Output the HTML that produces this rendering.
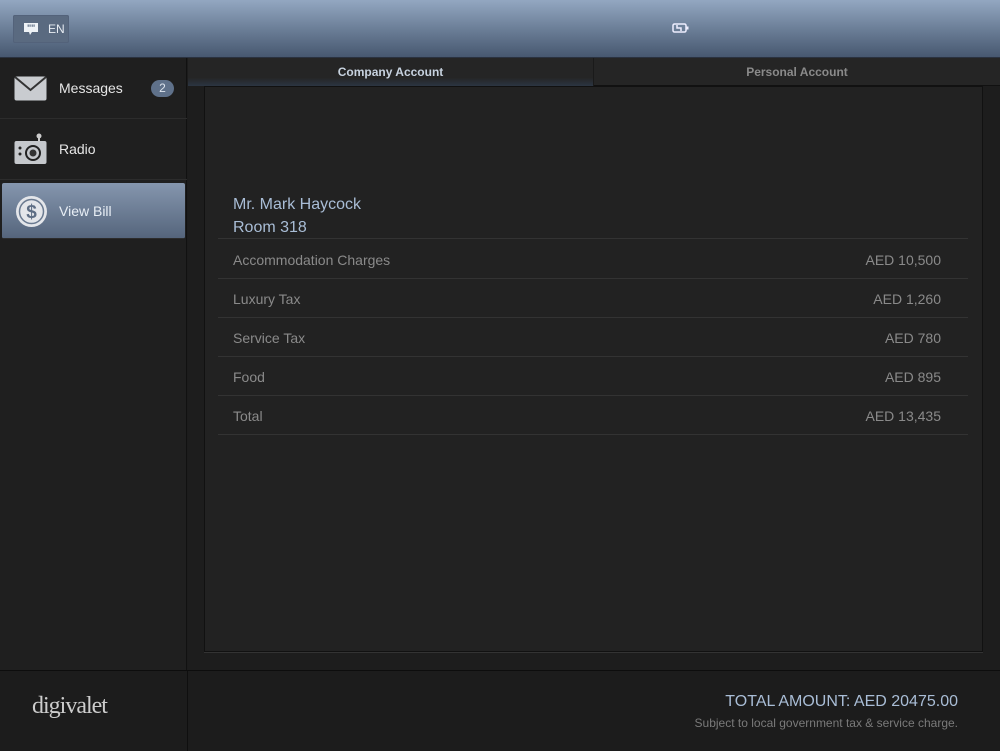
<!DOCTYPE html>
<html><head><style>
*{margin:0;padding:0;box-sizing:border-box}
body{width:1000px;height:750px;background:#1c1c1c;font-family:"Liberation Sans",sans-serif;position:relative;overflow:hidden}
.top{position:absolute;left:0;top:0;width:1000px;height:58px;background:linear-gradient(#93a7c1,#6c7f98 50%,#475870);border-bottom:1px solid #2a3240}
.en{position:absolute;left:13px;top:15px;width:56px;height:28px;background:#5a6a80;border-radius:2px;color:#e8edf3;font-size:12px;line-height:28px;padding-left:35px;box-shadow:inset 0 0 0 1px #53627a}
.side{position:absolute;left:0;top:58px;width:187px;height:612px;background:#1f1f1f;border-right:1px solid #111}
.item{position:absolute;left:0;width:187px;height:61px;border-bottom:1px solid #2c2c2c;color:#e6e6e6;font-size:14px;line-height:61px;padding-left:59px}
.sel{left:2px;width:183px;background:linear-gradient(#8596ae,#55657c);border-radius:2px;top:183px;height:56px;line-height:56px;padding-left:57px;color:#e8eef5}
.badge{position:absolute;right:13px;top:22px;width:23px;height:17px;border-radius:9px;background:#5f718a;color:#dde4ee;font-size:12px;line-height:17px;text-align:center;padding:0}
.tabs{position:absolute;left:188px;top:58px;width:812px;height:28px;background:#252525;border-bottom:1px solid #111}
.tab{position:absolute;top:0;height:28px;line-height:28px;text-align:center;font-size:12px;font-weight:bold}
.main{position:absolute;left:188px;top:86px;width:812px;height:584px;background:#1d1d1d}
.panel{position:absolute;left:204px;top:86px;width:779px;height:566px;background:#222;border:1px solid #111;box-shadow:0 1px 0 #333}
.row{position:absolute;left:218px;width:750px;height:39px;border-bottom:1px solid #333;color:#8a8a8a;font-size:14px;line-height:40px;padding-left:15px}
.row span{position:absolute;right:27px}
.foot{position:absolute;left:0;top:670px;width:1000px;height:80px;background:#1c1c1c;border-top:1px solid #0d0d0d}
</style></head><body>
<div class="top">
<div class="en"><svg style="position:absolute;left:10px;top:7px" width="16" height="15" viewBox="0 0 16 15"><path d="M1 1h14v9H9l-2 3-1-3H1z" fill="#eef2f6"/><text x="4" y="9" font-size="9" fill="#5a6a80" font-weight="bold">"</text><text x="8" y="9" font-size="9" fill="#5a6a80" font-weight="bold">"</text></svg>EN</div>
<svg style="position:absolute;left:672px;top:23px" width="17" height="10" viewBox="0 0 17 10"><rect x="1" y="1" width="13" height="8" rx="1.5" fill="none" stroke="#eef" stroke-width="1.5"/><rect x="14.5" y="3.5" width="2" height="3" fill="#eef"/><path d="M5 2v3h4v3" stroke="#eef" stroke-width="1.5" fill="none"/></svg>
</div>
<div class="side">
<div class="item" style="top:0">
<svg style="position:absolute;left:14px;top:18px" width="33" height="25" viewBox="0 0 33 25"><rect x="0.5" y="0.5" width="32" height="24" rx="2" fill="#c9ccd0"/><path d="M1 1l15.5 13L32 1" stroke="#333" stroke-width="2" fill="none"/></svg>
Messages<div class="badge">2</div></div>
<div class="item" style="top:61px">
<svg style="position:absolute;left:14px;top:75px;top:14px" width="33" height="32" viewBox="0 0 33 32"><circle cx="25" cy="3" r="2.5" fill="#ccc"/><rect x="24" y="4" width="2" height="5" fill="#ccc"/><rect x="0.5" y="8" width="32" height="23" rx="2" fill="#c5c8cc"/><circle cx="19" cy="20" r="7" fill="none" stroke="#222" stroke-width="2"/><circle cx="19" cy="20" r="3.5" fill="#333"/><circle cx="6" cy="15" r="1.5" fill="#222"/><circle cx="6" cy="21" r="1.5" fill="#222"/></svg>
Radio</div>
<div class="item sel" style="top:125px">
<svg style="position:absolute;left:13px;top:12px" width="33" height="33" viewBox="0 0 33 33"><circle cx="16.5" cy="16.5" r="15.5" fill="#e4e6ea"/><circle cx="16.5" cy="16.5" r="12" fill="none" stroke="#6a7a90" stroke-width="1.5"/><text x="16.5" y="23" text-anchor="middle" font-size="19" font-weight="bold" fill="#5d6d84" font-family="Liberation Sans">$</text></svg>
View Bill</div>
</div>
<div class="tabs">
<div class="tab" style="left:0;width:405px;color:#c7d2df;background:linear-gradient(#252525 70%,#2b3542)">Company Account</div>
<div class="tab" style="left:405px;width:407px;color:#8a8a8a;border-left:1px solid #1a1a1a">Personal Account</div>
</div>
<div class="main"></div>
<div class="panel"></div>
<div style="position:absolute;left:233px;top:193px;color:#a9bdd6;font-size:16px;line-height:23px">Mr. Mark Haycock<br>Room 318</div>
<div style="position:absolute;left:218px;top:238px;width:750px;border-top:1px solid #333"></div>
<div class="row" style="top:240px">Accommodation Charges<span>AED 10,500</span></div>
<div class="row" style="top:279px">Luxury Tax<span>AED 1,260</span></div>
<div class="row" style="top:318px">Service Tax<span>AED 780</span></div>
<div class="row" style="top:357px">Food<span>AED 895</span></div>
<div class="row" style="top:396px">Total<span>AED 13,435</span></div>
<div class="foot">
<div style="position:absolute;left:187px;top:0;width:1px;height:80px;background:#0f0f0f"></div>
<div style="position:absolute;left:32px;top:22px;font-family:'Liberation Serif',serif;font-size:24px;color:#ccc;letter-spacing:-1px">digivalet</div>
<div style="position:absolute;right:42px;top:22px;color:#a9bdd6;font-size:16px">TOTAL AMOUNT: AED 20475.00</div>
<div style="position:absolute;right:42px;top:45px;color:#7a7a7a;font-size:12px">Subject to local government tax &amp; service charge.</div>
</div>
</body></html>
